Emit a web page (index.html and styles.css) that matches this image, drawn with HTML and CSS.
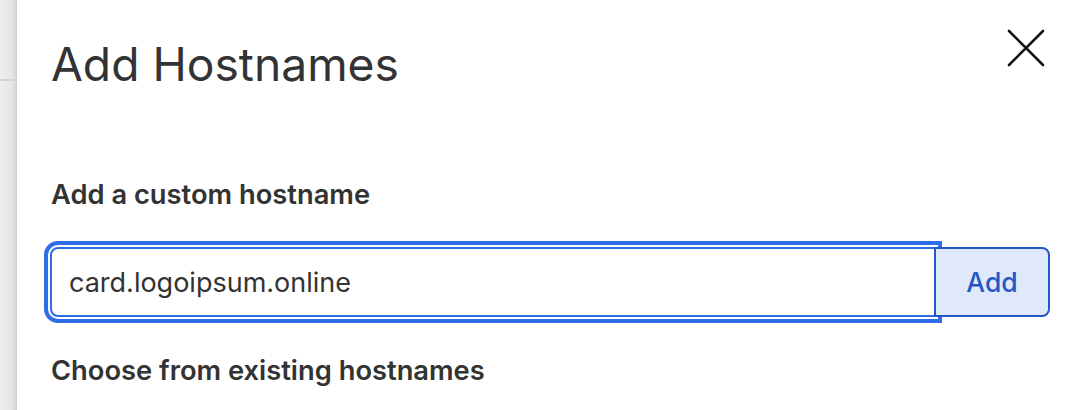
FILE: index.html
```html
<!DOCTYPE html>
<html>
<head>
<meta charset="utf-8">
<link rel="stylesheet" href="styles.css">
</head>
<body>
<div class="page">
  <aside class="backdrop">
    <div class="backdrop-top"></div>
    <div class="backdrop-bottom"></div>
  </aside>
  <main class="dialog">
    <header class="dialog-header">
      <h1 class="dialog-title">Add Hostnames</h1>
      <button class="close-btn" aria-label="Close">
        <svg width="38" height="38" viewBox="0 0 38 38"><path d="M2 2 L36 36 M36 2 L2 36" stroke="#111" stroke-width="2.6" stroke-linecap="round" fill="none"/></svg>
      </button>
    </header>
    <section class="section">
      <h2 class="section-title">Add a custom hostname</h2>
      <div class="input-row">
        <input class="host-input" type="text" value="card.logoipsum.online">
        <button class="add-btn">Add</button>
      </div>
    </section>
    <section class="section">
      <h2 class="section-title">Choose from existing hostnames</h2>
    </section>
  </main>
</div>
</body>
</html>
```
FILE: styles.css
```css
html, body {
  margin: 0;
  padding: 0;
  background: #fff;
  height: 100%;
  overflow: hidden;
}
.page {
  display: flex;
  height: 410px;
  font-family: Inter, "Noto Sans", sans-serif;
  color: #333;
}
.backdrop {
  width: 17px;
  flex: none;
  display: flex;
  flex-direction: column;
  background: linear-gradient(to right, #ececec 0, #e6e6e6 12px, #d9d9d9 15px, #cfcfcf 17px);
}
.backdrop-top {
  height: 79px;
  border-bottom: 2px solid #d4d4d4;
}
.backdrop-bottom {
  flex: 1;
}
.dialog {
  flex: 1;
  min-width: 0;
  padding: 0 35px 0 34px;
}
.dialog-header {
  display: flex;
  justify-content: space-between;
  align-items: flex-start;
  height: 170px;
}
.dialog-title {
  margin: 36px 0 0;
  font-size: 46.2px;
  font-weight: 400;
  line-height: 56px;
  color: #333;
}
.close-btn {
  margin-top: 29px;
  padding: 0;
  border: 0;
  background: none;
  width: 38px;
  height: 38px;
}
.close-btn svg {
  display: block;
}
.section-title {
  margin: 0;
  font-size: 27.3px;
  font-weight: 600;
  line-height: 50px;
  color: #333;
}
.input-row {
  display: flex;
  margin: 27px 0 0 -1px;
  width: 1000px;
}
.host-input {
  flex: 1;
  height: 70px;
  box-sizing: border-box;
  border: 2px solid #2f6de8;
  border-radius: 8px 0 0 8px;
  outline: 4px solid #2f6de8;
  outline-offset: 2px;
  padding: 0 17px;
  font-family: Inter, "Noto Sans", sans-serif;
  font-size: 27px;
  color: #333;
  background: #fff;
}
.add-btn {
  position: relative;
  width: 116px;
  height: 70px;
  margin-left: -2px;
  box-sizing: border-box;
  border: 2px solid #2456c4;
  border-radius: 0 8px 8px 0;
  background: #dfe9fb;
  color: #2456c4;
  font-family: Inter, "Noto Sans", sans-serif;
  font-size: 26.5px;
  font-weight: 500;
}
.section + .section {
  margin-top: 29px;
}
```
